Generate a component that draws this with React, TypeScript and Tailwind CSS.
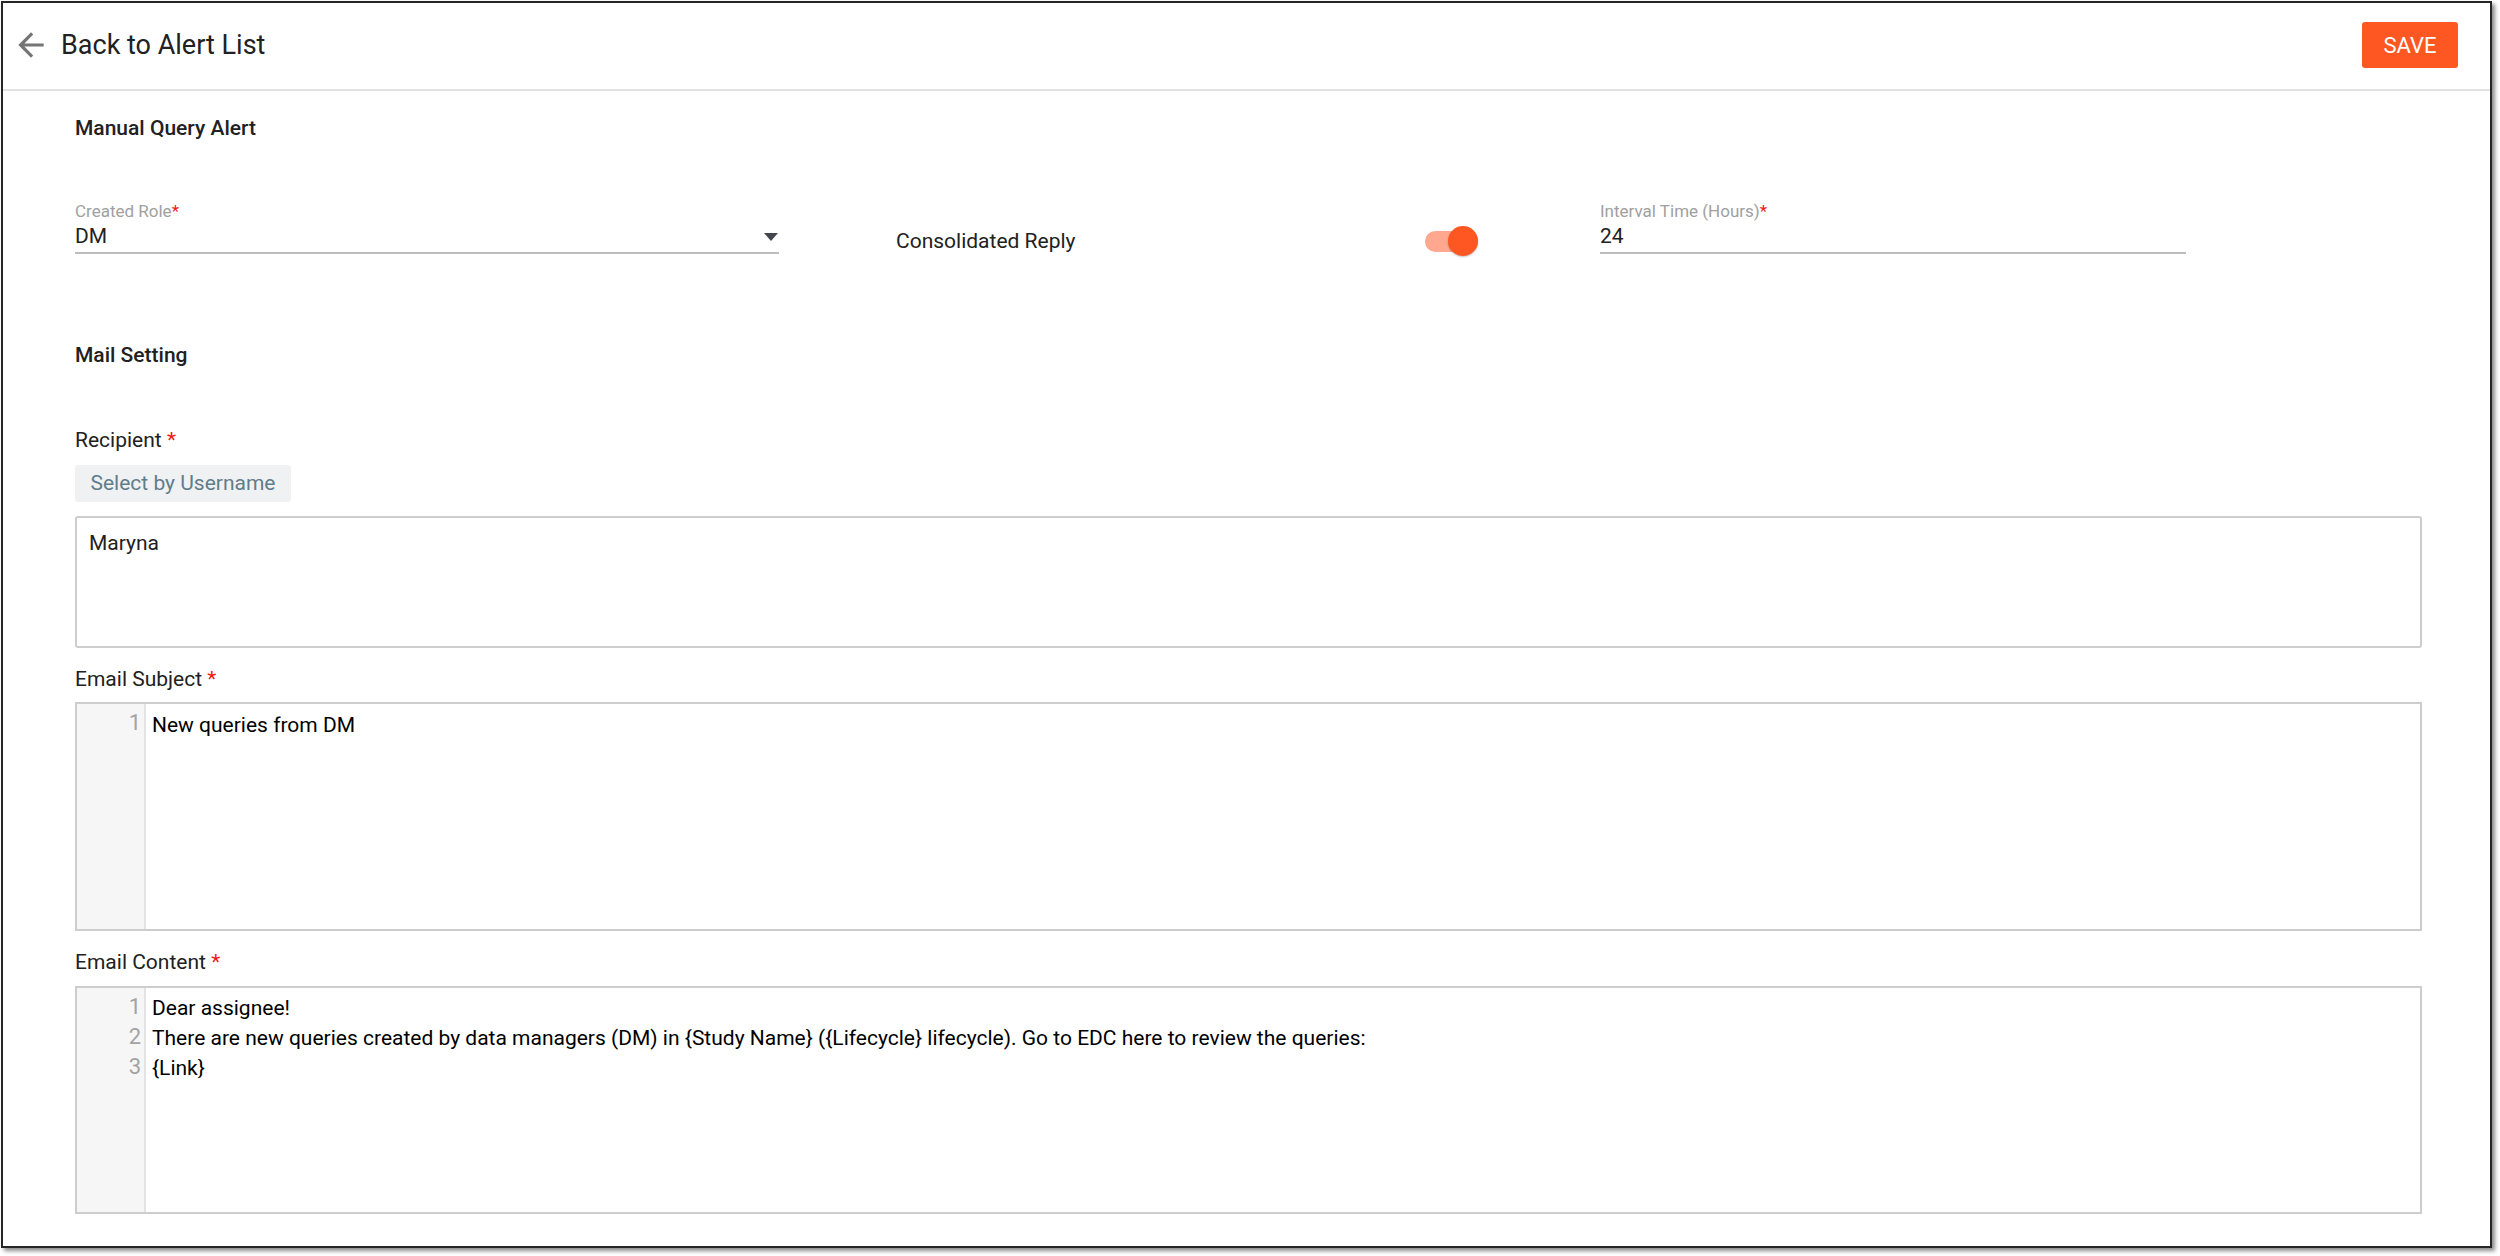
import React from "react";

const font = { fontFamily: "Roboto, sans-serif" };

function Req() {
  return <span className="text-[#f01818]">*</span>;
}

function CodeBox({ heightClass, lines, textTopClass }: { heightClass: string; lines: string[]; textTopClass: string }) {
  return (
    <div className={`flex w-[2347px] border-2 border-[#cdcdcd] ${heightClass}`}>
      <div className="flex w-[69px] shrink-0 flex-col items-end border-r-2 border-[#e3e3e3] bg-[#f6f6f6] pt-[4px] pr-[3px] text-[#a3a3a3]">
        {lines.map((_, i) => (
          <div key={i} className="h-[30px] text-[22px] leading-[30px]">{i + 1}</div>
        ))}
      </div>
      <div className={`flex-1 pl-[6px] text-black ${textTopClass}`}>
        {lines.map((l, i) => (
          <div key={i} className="h-[30px] text-[21px] leading-[30px] whitespace-pre">{l}</div>
        ))}
      </div>
    </div>
  );
}

export default function App() {
  return (
    <div className="h-[1256px] w-[2500px] overflow-hidden bg-white pt-[1px] pl-[1px]" style={font}>
      <div className="flex h-[1247px] w-[2491px] flex-col border-2 border-[#262626] bg-white shadow-[3px_3px_4px_rgba(0,0,0,0.45)]">
        <header className="flex h-[88px] shrink-0 items-center justify-between border-b-2 border-[#e2e2e2] pr-[32px] pb-[2px] pl-[9px]">
          <div className="flex items-center">
            <svg width="38" height="38" viewBox="0 0 24 24" fill="#757575" className="shrink-0">
              <path d="M20 11H7.83l5.59-5.59L12 4l-8 8 8 8 1.41-1.41L7.83 13H20v-2z" />
            </svg>
            <span className="ml-[11px] text-[27px] text-[#212121]">Back to Alert List</span>
          </div>
          <button className="flex h-[46px] w-[96px] items-center justify-center rounded-[3px] bg-[#ff5722] text-[22px] text-white">
            SAVE
          </button>
        </header>

        <main className="flex flex-col pl-[72px] text-[#212121]">
          <h2 className="mt-[23px] text-[21px] leading-[28px] font-medium">Manual Query Alert</h2>

          <div className="mt-[54px] flex items-start">
            <div className="w-[704px]">
              <div className="h-[28px] text-[17px] leading-[30px] text-[#a0a0a0]">Created Role<Req /></div>
              <div className="flex h-[30px] items-center justify-between border-b-2 border-[#bdbdbd] pr-[1px] pb-[3px]">
                <span className="text-[21px]">DM</span>
                <span className="h-0 w-0 border-x-[7px] border-t-[8px] border-x-transparent border-t-[#45454f]" />
              </div>
            </div>
            <div className="mt-[30px] ml-[117px] flex w-[582px] items-center justify-between">
              <span className="text-[21px] leading-[30px]">Consolidated Reply</span>
              <div className="relative h-[21px] w-[53px] rounded-full bg-[#ffa78f]">
                <span className="absolute top-[-5px] right-0 h-[30px] w-[30px] rounded-full bg-[#ff5722] shadow-[0_1px_2px_rgba(0,0,0,0.25)]" />
              </div>
            </div>
            <div className="ml-[122px] w-[586px]">
              <div className="h-[28px] text-[17px] leading-[30px] text-[#a0a0a0]">Interval Time (Hours)<Req /></div>
              <div className="flex h-[30px] items-center border-b-2 border-[#bdbdbd] pb-[3px]">
                <span className="text-[21px]">24</span>
              </div>
            </div>
          </div>

          <h2 className="mt-[85px] text-[21px] leading-[28px] font-medium">Mail Setting</h2>

          <div className="mt-[56px] text-[21px] leading-[30px]">Recipient <Req /></div>
          <button className="mt-[10px] flex h-[37px] w-[216px] items-center justify-center rounded-[3px] bg-[#eff1f3] text-[21px] text-[#607d8b]">
            Select by Username
          </button>
          <div className="mt-[14px] h-[132px] w-[2347px] rounded-[3px] border-2 border-[#cdcdcd] pt-[10px] pl-[12px] text-[21px] leading-[30px]">
            Maryna
          </div>

          <div className="mt-[16px] text-[21px] leading-[30px]">Email Subject <Req /></div>
          <div className="mt-[8px]">
            <CodeBox heightClass="h-[229px]" textTopClass="pt-[6px]" lines={["New queries from DM"]} />
          </div>

          <div className="mt-[16px] text-[21px] leading-[30px]">Email Content <Req /></div>
          <div className="mt-[9px]">
            <CodeBox
              heightClass="h-[228px]"
              textTopClass="pt-[5px]"
              lines={[
                "Dear assignee!",
                "There are new queries created by data managers (DM) in {Study Name} ({Lifecycle} lifecycle). Go to EDC here to review the queries:",
                "{Link}",
              ]}
            />
          </div>
        </main>
      </div>
    </div>
  );
}
